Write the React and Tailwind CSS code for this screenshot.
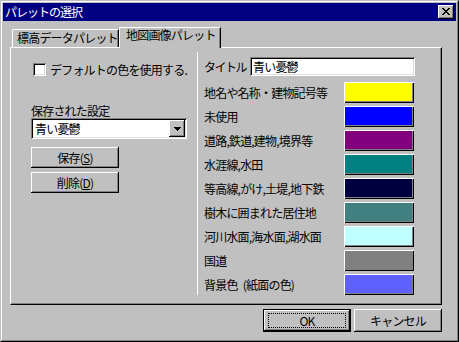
import React from "react";

const raised = "shadow-[inset_-1px_-1px_0_#000,inset_1px_1px_0_#fff,inset_-2px_-2px_0_#808080]";
const sunken = "shadow-[inset_1px_1px_0_#808080,inset_-1px_-1px_0_#fff,inset_2px_2px_0_#000,inset_-2px_-2px_0_#dfdfdf]";

function Btn({ children, className }) {
  return (
    <div className={"flex items-center justify-center bg-[#c0c0c0] shadow-[inset_-1px_-1px_0_#000,inset_1px_1px_0_#fff,inset_-2px_-2px_0_#808080] " + className}>
      {children}
    </div>
  );
}

const rows = [
  ["地名や名称・建物記号等", "bg-[#ffff00]"],
  ["未使用", "bg-[#0000ff]"],
  ["道路,鉄道,建物,境界等", "bg-[#800080]"],
  ["水涯線,水田", "bg-[#008080]"],
  ["等高線,がけ,土堤,地下鉄", "bg-[#000040]"],
  ["樹木に囲まれた居住地", "bg-[#408080]"],
  ["河川水面,海水面,湖水面", "bg-[#c0ffff]"],
  ["国道", "bg-[#808080]"],
  ["背景色\u2002(紙面の色)", "bg-[#6060ff]"],
];

export default function App() {
  return (
    <div className="w-[459px] h-[342px] bg-[#c0c0c0] border border-t-[#c0c0c0] border-l-[#c0c0c0] border-r-black border-b-black font-['Noto_Sans_CJK_JP',sans-serif] text-[12px] leading-[12px] tracking-[-0.8px] text-black">
      <div className="h-full border border-t-white border-l-white border-r-[#808080] border-b-[#808080] p-px flex flex-col">
        {/* title bar */}
        <div className="h-[18px] bg-[#000080] flex items-center justify-between">
          <span className="pl-[2px] text-white tracking-[-1px]">パレットの選択</span>
          <div className={"w-[16px] h-[14px] mr-[2px] bg-[#c0c0c0] " + raised}>
            <svg width="16" height="14" viewBox="0 0 16 14" shapeRendering="crispEdges">
              <g fill="#000">
                <rect x="4" y="3" width="2" height="1" />
                <rect x="10" y="3" width="2" height="1" />
                <rect x="5" y="4" width="2" height="1" />
                <rect x="9" y="4" width="2" height="1" />
                <rect x="6" y="5" width="4" height="1" />
                <rect x="7" y="6" width="2" height="1" />
                <rect x="6" y="7" width="4" height="1" />
                <rect x="5" y="8" width="2" height="1" />
                <rect x="9" y="8" width="2" height="1" />
                <rect x="4" y="9" width="2" height="1" />
                <rect x="10" y="9" width="2" height="1" />
              </g>
            </svg>
          </div>
        </div>

        {/* tabs */}
        <div className="mt-[6px] ml-[9px] flex items-start">
          <div className="mt-[2px] w-[107px] h-[18px] border-t border-l border-r border-t-white border-l-white border-r-black shadow-[inset_-1px_0_0_#808080] rounded-tl-[2px] pl-[4px] pt-[2px] whitespace-nowrap">
            標高データパレット
          </div>
          <div className="relative z-10 mb-[-1px] w-[102px] h-[21px] bg-[#c0c0c0] border-t border-l border-r border-t-white border-l-white border-r-black shadow-[inset_-1px_0_0_#808080] rounded-tl-[2px] pl-[6px] pt-[1px] whitespace-nowrap">
            地図画像パレット
          </div>
        </div>

        {/* panel */}
        <div className="ml-[7px] w-[432px] h-[258px] border border-t-white border-l-white border-r-black border-b-black shadow-[inset_-1px_-1px_0_#808080] flex">
          {/* left pane */}
          <div className="w-[186px] flex flex-col pl-[20px] pt-[15px]">
            <div className="flex items-center h-[13px] pl-[2px]">
              <div className={"w-[13px] h-[13px] bg-white " + sunken} />
              <span className="ml-[4px] whitespace-nowrap">デフォルトの色を使用する.</span>
            </div>
            <div className="mt-[29px] h-[12px] whitespace-nowrap">保存された設定</div>
            <div className={"mt-[1px] w-[156px] h-[21px] bg-white flex items-center " + sunken}>
              <span className="flex-1 pl-[4px]">青い憂鬱</span>
              <Btn className="w-[16px] h-[17px] mr-[2px]">
                <svg width="7" height="4" viewBox="0 0 7 4" shapeRendering="crispEdges">
                  <path d="M0 0h7v1h-1v1h-1v1h-1v1h-1v-1h-1v-1h-1v-1h-1z" fill="#000" />
                </svg>
              </Btn>
            </div>
            <Btn className="mt-[8px] w-[88px] h-[21px]">
              <span>保存(<span className="underline">S</span>)</span>
            </Btn>
            <Btn className="mt-[4px] w-[88px] h-[21px]">
              <span>削除(<span className="underline">D</span>)</span>
            </Btn>
          </div>

          {/* separator */}
          <div className="w-px bg-white mt-[4px] mb-[9px]" />

          {/* right pane */}
          <div className="flex-1 flex flex-col pl-[6px] pt-[9px]">
            <div className="flex items-center h-[19px]">
              <span className="w-[46px] whitespace-nowrap tracking-[-1.5px]">タイトル</span>
              <div className={"w-[165px] h-[19px] bg-white flex items-center pl-[3px] " + sunken}>
                青い憂鬱
              </div>
            </div>
            <div className="mt-[6px] flex flex-col gap-[3px]">
              {rows.map(([label, color]) => (
                <div key={label} className="flex items-center h-[21px]">
                  <span className="w-[140px] whitespace-nowrap">{label}</span>
                  <div className={"w-[70px] h-[21px] shadow-[inset_1px_1px_0_#fff,inset_-1px_-1px_0_#000,inset_-2px_-2px_0_#808080] " + color} />
                </div>
              ))}
            </div>
          </div>
        </div>

        {/* bottom buttons */}
        <div className="mt-[4px] ml-[7px] w-[432px] flex justify-end gap-[3px]">
          <div className="w-[88px] h-[23px] border border-black">
            <Btn className="w-full h-full">
              <div className="w-[78px] h-[15px] border border-dotted border-black flex items-center justify-center">OK</div>
            </Btn>
          </div>
          <Btn className="w-[88px] h-[23px]">キャンセル</Btn>
        </div>
      </div>
    </div>
  );
}
